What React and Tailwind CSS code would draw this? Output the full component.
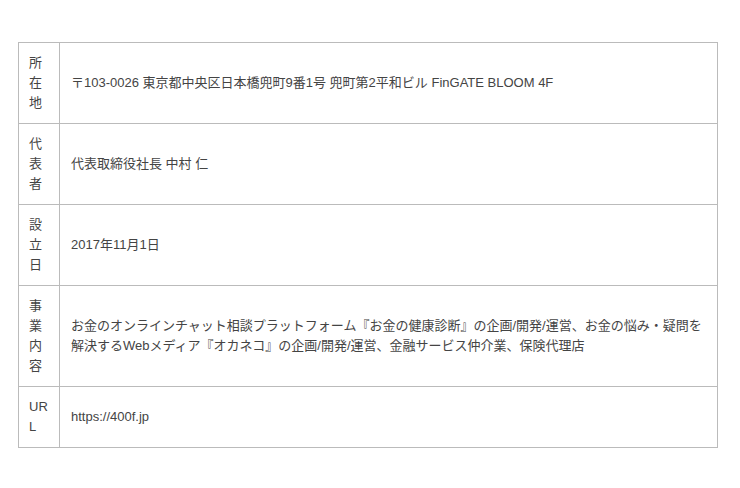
const rows = [
  ['所在地', '〒103-0026 東京都中央区日本橋兜町9番1号 兜町第2平和ビル FinGATE BLOOM 4F'],
  ['代表者', '代表取締役社長 中村 仁'],
  ['設立日', '2017年11月1日'],
  ['事業内容', 'お金のオンラインチャット相談プラットフォーム『お金の健康診断』の企画/開発/運営、お金の悩み・疑問を解決するWebメディア『オカネコ』の企画/開発/運営、金融サービス仲介業、保険代理店'],
  ['URL', 'https://400f.jp'],
]

export default function App() {
  return (
    <div className="w-[740px] h-[488px] bg-white pt-[42px] pl-[18px] font-['Liberation_Sans','Noto_Sans_CJK_JP',sans-serif] text-[13px] leading-[20px] text-[#444]">
      <table className="w-[700px] border-collapse">
        <tbody>
          {rows.map(([label, value]) => (
            <tr key={label}>
              <td className="border border-[#bbb] px-[10px] py-[10px] align-middle">
                <div className="w-[20px] break-all">{label}</div>
              </td>
              <td className="border border-[#bbb] pl-[11px] pr-[8px] py-[10px] align-middle">
                {value}
              </td>
            </tr>
          ))}
        </tbody>
      </table>
    </div>
  )
}
